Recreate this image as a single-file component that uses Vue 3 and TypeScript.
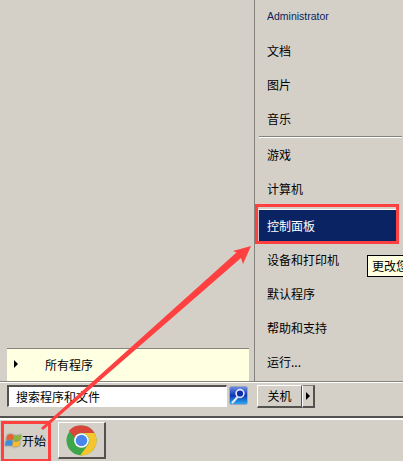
<script setup lang="ts">
const rowsA: string[] = ['文档', '图片', '音乐']
const rowsB: string[] = ['游戏', '计算机']
const rowsC: string[] = ['设备和打印机', '默认程序', '帮助和支持']
</script>

<template>
  <div class="screen">
    <div class="menu">
      <div class="panes">
        <div class="left">
          <div class="all"><span class="tri"></span><span>所有程序</span></div>
        </div>
        <div class="right">
          <div class="row admin">Administrator</div>
          <div v-for="r in rowsA" :key="r" class="row">{{ r }}</div>
          <div class="sep"></div>
          <div v-for="r in rowsB" :key="r" class="row">{{ r }}</div>
          <div class="row selected">控制面板</div>
          <div v-for="r in rowsC" :key="r" class="row">{{ r }}</div>
          <div class="row">运行...</div>
        </div>
      </div>
      <div class="bottom">
        <div class="search">
          <div class="input">搜索程序和文件</div>
          <div class="sbtn">
            <svg width="19" height="19" viewBox="0 0 19 19">
              <defs>
                <linearGradient id="sb" x1="0" y1="0" x2="0" y2="1">
                  <stop offset="0" stop-color="#6f90e4" />
                  <stop offset="0.5" stop-color="#0d36b4" />
                  <stop offset="1" stop-color="#2cb0f4" />
                </linearGradient>
              </defs>
              <rect x="0.5" y="0.5" width="18" height="18" rx="2" fill="url(#sb)" stroke="#9aa6c4" />
              <path d="M3.5 16.5 L8.5 11" stroke="#e4e8f0" stroke-width="2.2" stroke-linecap="round" />
              <circle cx="11" cy="7.5" r="3.9" fill="#0a2cae" stroke="#e4e8f2" stroke-width="1.6" />
            </svg>
          </div>
        </div>
        <div class="power">
          <div class="pbtn">关机</div>
          <div class="parrow"><span class="tri"></span></div>
        </div>
      </div>
    </div>
    <div class="taskbar">
      <div class="start">
        <svg class="flag" width="17" height="15" viewBox="0 0 17 15">
          <path d="M2.4 2.2 Q5.4 .4 8.6 2 L7.6 7 Q4.4 5.4 1.2 7 Z" fill="#e8602c" />
          <path d="M9.6 2.2 Q12.6 3.6 16.4 1.4 L15.4 6.4 Q11.6 8.6 8.6 7.2 Z" fill="#86b83a" />
          <path d="M1 8 Q4.2 6.4 7.4 8 L6.4 13 Q3.2 11.4 0 13 Z" fill="#3a8ede" />
          <path d="M8.4 8.2 Q11.4 9.6 15.2 7.4 L14.2 12.4 Q10.4 14.6 7.4 13.2 Z" fill="#f3bd2e" />
        </svg>
        <span>开始</span>
      </div>
      <div class="chrome">
        <svg width="31" height="31" viewBox="0 0 32 32">
          <circle cx="16" cy="16" r="15.5" fill="#3da64a" />
          <path d="M16 .5 A15.5 15.5 0 0 1 29.4 8.2 L16 8.2 A8 8 0 0 0 8.8 13 L3 6 A15.5 15.5 0 0 1 16 .5 Z" fill="#d9463a" />
          <path d="M29.4 8.2 A15.5 15.5 0 0 1 14.5 31.4 L22.9 20 A8 8 0 0 0 22.9 12 A8 8 0 0 0 16 8.2 Z" fill="#f6c52e" />
          <circle cx="16" cy="16" r="7.6" fill="#fff" />
          <circle cx="16" cy="16" r="6" fill="#4a86ec" />
        </svg>
      </div>
    </div>
    <div class="tip">更改您的计算机设置</div>
    <div class="mark sel"></div>
    <div class="mark st"></div>
    <svg class="arrow" width="403" height="461" viewBox="0 0 403 461">
      <path d="M41 428 L236.5 252.5 L233 251 L251 246 L243 264 L241 258 L43 430 Z" fill="#ff4040" />
    </svg>
  </div>
</template>

<style>
html, body { margin: 0; background: #d4d0c8; }
</style>

<style scoped>
.screen {
  position: relative;
  width: 403px;
  height: 461px;
  overflow: hidden;
  background: #d4d0c8;
  display: flex;
  flex-direction: column;
  font-family: "Noto Sans CJK SC", "Liberation Sans", sans-serif;
  font-size: 12px;
  color: #000;
}
.menu {
  height: 416px;
  display: flex;
  flex-direction: column;
  border-bottom: 2px solid #54524e;
  box-shadow: 0 1px 0 #fff;
  box-sizing: content-box;
}
.panes {
  height: 381px;
  display: flex;
  border-bottom: 1px solid #85837e;
  box-shadow: 0 1px 0 #fff;
}
.left {
  width: 255px;
  flex: none;
  box-sizing: border-box;
  padding-left: 7px;
  padding-right: 5px;
  border-right: 1px solid #85837e;
  display: flex;
  flex-direction: column;
  justify-content: flex-end;
}
.all {
  height: 33px;
  box-sizing: border-box;
  background: #ffffe1;
  border-top: 1px solid #85837e;
  display: flex;
  align-items: center;
  gap: 27px;
  padding: 0 0 2px 7px;
}
.tri {
  width: 0;
  height: 0;
  border-left: 4px solid #000;
  border-top: 4px solid transparent;
  border-bottom: 4px solid transparent;
}
.right {
  flex: 1;
  padding-left: 4px;
  padding-right: 1px;
  min-width: 0;
}
.row {
  height: 34px;
  line-height: 33px;
  padding-left: 8px;
  box-sizing: border-box;
}
.admin {
  font-family: "Liberation Sans", sans-serif;
  font-size: 10.5px;
  color: #0a1f5c;
  line-height: 32px;
}
.sep {
  height: 5px;
  margin-bottom: -4px;
  border-top: 1px solid #85837e;
  box-shadow: inset 0 1px 0 #fff;
}
.selected {
  margin: 3px 5px 0 -1px;
  padding-left: 8px;
  line-height: 32px;
  background: #0a2463;
  color: #fff;
  border-top: 1px solid #fff;
  border-left: 1px solid #c8c8d0;
}
.bottom {
  flex: 1;
  display: flex;
  padding: 3px 0 0 7px;
  align-items: flex-start;
}
.search {
  width: 242px;
  display: flex;
  gap: 2px;
}
.input {
  width: 220px;
  height: 22px;
  box-sizing: border-box;
  background: #fff;
  border: 1px solid #fff;
  border-top: 2px solid #54524e;
  border-left: 2px solid #54524e;
  line-height: 19px;
  padding-left: 7px;
}
.sbtn {
  width: 19px;
  height: 20px;
  margin-top: 1px;
  display: flex;
}
.power {
  margin-left: 8px;
  display: flex;
  height: 23px;
}
.pbtn {
  width: 45px;
  box-sizing: border-box;
  border: 1px solid #fff;
  border-right: 1px solid #54524e;
  border-bottom: 2px solid #54524e;
  text-align: center;
  line-height: 20px;
}
.parrow {
  width: 13px;
  box-sizing: border-box;
  border-left: 1px solid #fff;
  border-top: 1px solid #85837e;
  border-right: 2px solid #54524e;
  border-bottom: 2px solid #54524e;
  display: flex;
  align-items: center;
  justify-content: center;
}
.taskbar {
  flex: 1;
  display: flex;
  padding: 3px 0 0 0;
  gap: 8px;
  margin-top: 1px;
  box-shadow: inset 0 1px 0 #fff;
}
.start {
  width: 49px;
  margin-left: 1px;
  height: 37px;
  display: flex;
  align-items: center;
  padding-left: 4px;
  box-sizing: border-box;
  flex: none;
  font-size: 12px;
}
.flag {
  filter: drop-shadow(0 0 1px rgba(40, 40, 40, 0.6));
}
.chrome {
  width: 48px;
  height: 37px;
  box-sizing: border-box;
  border: 1px solid #fff;
  border-right: 2px solid #54524e;
  border-bottom: 2px solid #54524e;
  display: flex;
  align-items: center;
  justify-content: center;
  flex: none;
}
.tip {
  position: absolute;
  left: 367px;
  top: 255px;
  width: 90px;
  height: 22px;
  box-sizing: border-box;
  background: #ffffe1;
  border: 1px solid #000;
  padding-left: 4px;
  line-height: 20px;
  white-space: nowrap;
}
.mark {
  position: absolute;
  border: 3px solid #ff4040;
  box-sizing: border-box;
}
.sel { left: 255px; top: 204px; width: 144px; height: 40px; }
.st { left: 1px; top: 421px; width: 50px; height: 41px; }
.arrow { position: absolute; left: 0; top: 0; pointer-events: none; }
</style>
